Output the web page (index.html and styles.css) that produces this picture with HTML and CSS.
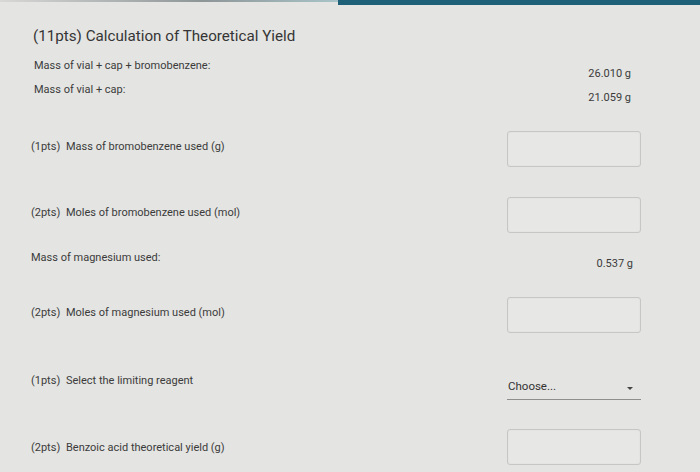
FILE: index.html
```html
<!DOCTYPE html>
<html>
<head>
<meta charset="utf-8">
<link rel="stylesheet" href="styles.css">
</head>
<body>
<div class="topbar"><div class="topbar-left"></div><div class="topbar-right"></div></div>
<main class="page">
  <h1 class="title">(11pts) Calculation of Theoretical Yield</h1>

  <div class="info-row first">
    <span class="label">Mass of vial + cap + bromobenzene:</span>
    <span class="value">26.010 g</span>
  </div>
  <div class="info-row">
    <span class="label">Mass of vial + cap:</span>
    <span class="value">21.059 g</span>
  </div>

  <div class="q-row r1">
    <span class="label"><span class="pts">(1pts)</span> Mass of bromobenzene used (g)</span>
    <div class="box"></div>
  </div>
  <div class="q-row r2">
    <span class="label"><span class="pts">(2pts)</span> Moles of bromobenzene used (mol)</span>
    <div class="box"></div>
  </div>
  <div class="q-row r3">
    <span class="label">Mass of magnesium used:</span>
    <div class="static">0.537 g</div>
  </div>
  <div class="q-row r4">
    <span class="label"><span class="pts">(2pts)</span> Moles of magnesium used (mol)</span>
    <div class="box"></div>
  </div>
  <div class="q-row r5">
    <span class="label up"><span class="pts">(1pts)</span> Select the limiting reagent</span>
    <div class="select">
      <span class="choose">Choose...</span>
      <span class="caret"></span>
    </div>
  </div>
  <div class="q-row r6">
    <span class="label mid"><span class="pts">(2pts)</span> Benzoic acid theoretical yield (g)</span>
    <div class="box"></div>
  </div>
</main>
</body>
</html>
```

FILE: styles.css
```css
html, body {
  margin: 0;
  padding: 0;
}
body {
  width: 700px;
  height: 472px;
  overflow: hidden;
  background: #e4e4e2;
  font-family: Roboto, "Liberation Sans", sans-serif;
  color: #3b3b3b;
}
.topbar {
  display: flex;
  height: 5px;
}
.topbar-left {
  flex: 0 0 338px;
  height: 2px;
  background: linear-gradient(to right, #d8d8d6, #8d9597 60%, #a8c4c8);
}
.topbar-right {
  flex: 1;
  background: #1f6079;
}
.page {
  padding: 0 59px 0 31px;
}
.title {
  margin: 21px 0 0 2px;
  font-size: 15.2px;
  line-height: 20px;
  font-weight: 400;
  color: #353535;
}
.info-row {
  display: flex;
  justify-content: space-between;
  height: 24px;
  font-size: 11px;
  line-height: 16px;
}
.info-row.first {
  margin-top: 12px;
}
.info-row .label {
  padding-left: 3px;
}
.info-row .value {
  margin-top: 8px;
  padding-right: 10px;
}
.q-row {
  display: flex;
  justify-content: space-between;
  align-items: center;
  height: 36px;
  font-size: 11px;
}
.q-row .label {
  padding-bottom: 6px;
}
.q-row .label.up {
  padding-bottom: 12px;
}
.q-row .label.mid {
  padding-bottom: 0;
}
.pts {
  margin-right: 3px;
}
.r1 { margin-top: 25px; }
.r2 { margin-top: 30px; }
.r3 { margin-top: 9px; }
.r4 { margin-top: 19px; }
.r5 { margin-top: 35px; }
.r6 { margin-top: 25px; }
.box {
  width: 132px;
  height: 34px;
  border: 1px solid #c6c6c4;
  border-radius: 3px;
  background: #e7e7e5;
  box-shadow: inset 0 0 2px rgba(0, 0, 0, 0.06);
}
.static {
  width: 126px;
  text-align: right;
  padding: 6px 8px 0 0;
}
.select {
  width: 134px;
  height: 26px;
  margin-top: 1px;
  border-bottom: 1px solid #8e8e8c;
  display: flex;
  align-items: center;
  justify-content: space-between;
  box-sizing: border-box;
  padding: 0 8px 0 1px;
}
.choose {
  color: #333;
  font-size: 11.5px;
}
.caret {
  width: 0;
  height: 0;
  border-left: 3px solid transparent;
  border-right: 3px solid transparent;
  border-top: 3px solid #444;
  margin-top: 4px;
}
```
